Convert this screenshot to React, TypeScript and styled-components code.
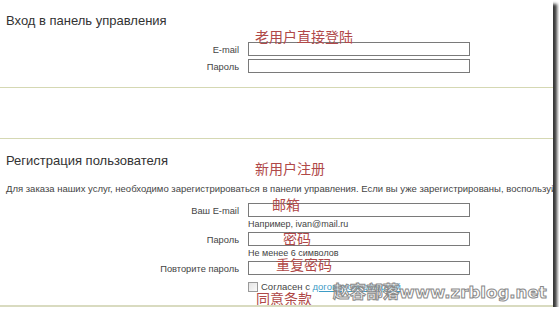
import styled, { createGlobalStyle } from 'styled-components'

const GlobalStyle = createGlobalStyle`
  html, body {
    margin: 0;
    padding: 0;
    background: #ffffff;
  }
  body {
    font-family: "Liberation Sans", Arial, sans-serif;
  }
`;

const Frame = styled.div`
  position: relative;
  width: 553px;
  height: 307px;
  box-sizing: border-box;
  background: #fff;
  border-bottom: 2px solid #d9dbc0;
  box-shadow: 4px 4px 3px rgba(0, 0, 0, 0.78);
  overflow: hidden;
`;

const Title = styled.h2<{ $top: number }>`
  margin: ${p => p.$top}px 0 0 6px;
  font-size: 13px;
  line-height: 16px;
  font-weight: normal;
  color: #333;
`;

const Divider = styled.hr<{ $top: number }>`
  margin: ${p => p.$top}px 0 0;
  border: 0;
  border-top: 1px solid #d5d8b3;
  height: 0;
`;

const Intro = styled.p`
  margin: 14px 0 0 6px;
  font-size: 9.5px;
  line-height: 12px;
  color: #444;
  white-space: nowrap;
`;

const Form = styled.div<{ $top: number }>`
  display: grid;
  grid-template-columns: 239px 222px;
  column-gap: 9px;
  row-gap: 3px;
  align-items: start;
  margin-top: ${p => p.$top}px;
`;

const Label = styled.label`
  grid-column: 1;
  height: 14px;
  text-align: right;
  font-size: 9.3px;
  line-height: 16px;
  color: #444;
`;

const Field = styled.div`
  grid-column: 2;
  display: flex;
  flex-direction: column;
`;

const Input = styled.input`
  box-sizing: border-box;
  width: 222px;
  height: 14px;
  margin: 0;
  padding: 0 2px;
  border: 1px solid #7a7a7a;
  background: #fff;
`;

const Hint = styled.span`
  font-size: 9px;
  line-height: 9px;
  margin-top: 3px;
  color: #444;
`;

const Agree = styled.div`
  grid-column: 2;
  display: flex;
  align-items: center;
  gap: 3px;
  margin-top: 4px;
  font-size: 9.5px;
  line-height: 10px;
  color: #444;
`;

const Check = styled.span`
  display: inline-block;
  width: 8px;
  height: 8px;
  border: 1px solid #9a9a9a;
  background: linear-gradient(135deg, #e4e4e4, #fafafa);
`;

const OfferLink = styled.a`
  color: #3e9cc6;
  text-decoration: underline;
`;

const Note = styled.span<{ $x: number; $y: number }>`
  position: absolute;
  left: ${p => p.$x}px;
  top: ${p => p.$y}px;
  font-family: "Noto Sans CJK SC", sans-serif;
  font-size: 14px;
  line-height: 16px;
  color: #b04848;
  white-space: nowrap;
`;

const Watermark = styled.span`
  position: absolute;
  left: 333px;
  top: 283px;
  font-family: "DejaVu Sans", "Noto Sans CJK SC", sans-serif;
  font-weight: bold;
  font-size: 16.6px;
  line-height: 20px;
  color: rgba(255, 255, 255, 0.55);
  -webkit-text-stroke: 1px #8a8a8a;
  white-space: nowrap;
`;

const App = () => {
  return (
    <>
      <GlobalStyle />
      <Frame>
        <Title $top={13}>Вход в панель управления</Title>
        <Form $top={13}>
          <Label>E-mail</Label>
          <Field><Input /></Field>
          <Label>Пароль</Label>
          <Field><Input type="password" /></Field>
        </Form>
        <Divider $top={14} />
        <Divider $top={50} />
        <Title $top={14}>Регистрация пользователя</Title>
        <Intro>
          Для заказа наших услуг, необходимо зарегистрироваться в панели управления. Если вы уже зарегистрированы, воспользуйтесь формой входа.
        </Intro>
        <Form $top={8}>
          <Label>Ваш E-mail</Label>
          <Field>
            <Input />
            <Hint>Например, ivan@mail.ru</Hint>
          </Field>
          <Label>Пароль</Label>
          <Field>
            <Input type="password" />
            <Hint>Не менее 6 символов</Hint>
          </Field>
          <Label>Повторите пароль</Label>
          <Field><Input type="password" /></Field>
          <Agree>
            <Check />
            <span>Согласен с <OfferLink href="#">договором-офертой</OfferLink></span>
          </Agree>
        </Form>

        <Note $x={255} $y={28}>老用户直接登陆</Note>
        <Note $x={255} $y={160}>新用户注册</Note>
        <Note $x={272} $y={196}>邮箱</Note>
        <Note $x={283} $y={230}>密码</Note>
        <Note $x={276} $y={256}>重复密码</Note>
        <Note $x={256} $y={290}>同意条款</Note>
        <Watermark>赵容部落www.zrblog.net</Watermark>
      </Frame>
    </>
  );
}

export default App;
